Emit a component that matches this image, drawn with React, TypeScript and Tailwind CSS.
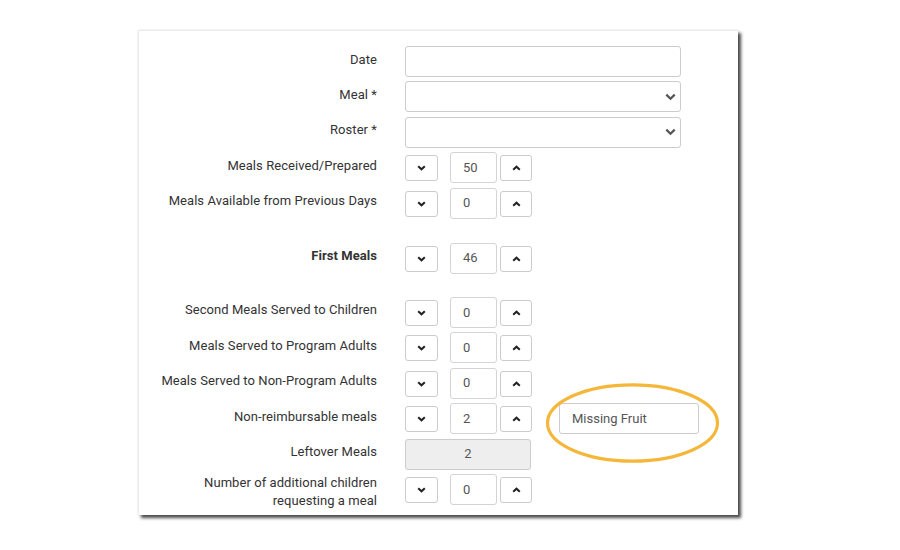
import React from "react";

const Down = () => (
  <svg width="9" height="6" viewBox="0 0 9 6" className="block">
    <path d="M1.2 1.2 L4.5 4.3 L7.8 1.2" fill="none" stroke="#222" strokeWidth="2" />
  </svg>
);
const Up = () => (
  <svg width="9" height="6" viewBox="0 0 9 6" className="block">
    <path d="M1.2 4.8 L4.5 1.7 L7.8 4.8" fill="none" stroke="#222" strokeWidth="2" />
  </svg>
);
const SelChev = () => (
  <svg width="11" height="8" viewBox="0 0 11 8" className="block">
    <path d="M1.3 1.6 L5.5 5.8 L9.7 1.6" fill="none" stroke="#555" strokeWidth="2.2" />
  </svg>
);

function Label({ children, bold, two }: { children: React.ReactNode; bold?: boolean; two?: boolean }) {
  return (
    <div
      className={`w-[238px] shrink-0 text-right text-[13px] leading-[18px] tracking-[0.06px] text-[#333] ${two ? "pt-[0.5px]" : "pt-[4.5px]"} ${bold ? "font-bold" : ""}`}
    >
      {children}
    </div>
  );
}

function Stepper({ value }: { value: string }) {
  return (
    <div className="flex items-start">
      <div className="mt-[3px] flex h-[26px] w-[33px] items-center justify-center rounded-[3px] border border-[#cccccc] bg-white">
        <Down />
      </div>
      <div className="ml-[12px] flex h-[31px] w-[47px] items-center rounded-[3px] border border-[#d4d4d4] bg-white pl-[12px] text-[13px] text-[#555]">
        {value}
      </div>
      <div className="ml-[3px] mt-[3px] flex h-[26px] w-[32px] items-center justify-center rounded-[3px] border border-[#cccccc] bg-white">
        <Up />
      </div>
    </div>
  );
}

function Row({ children, className = "" }: { children: React.ReactNode; className?: string }) {
  return <div className={`flex h-[35.4px] items-start ${className}`}>{children}</div>;
}

export default function App() {
  return (
    <div className="min-h-[550px] w-[900px] bg-white" style={{ fontFamily: "Roboto, 'Liberation Sans', sans-serif" }}>
      <div className="pl-[138px] pt-[30px]">
        <div className="relative h-[485px] w-[600px] border-l border-t border-[#ececec] bg-white pt-[15px] shadow-[0_0_2px_rgba(0,0,0,0.12),3px_3px_3px_rgba(0,0,0,0.7)]">
          <div className="flex flex-col">
            <Row>
              <Label>Date</Label>
              <div className="ml-[28px] h-[31px] w-[276px] rounded-[3px] border border-[#cccccc] bg-white" />
            </Row>
            <Row>
              <Label>Meal *</Label>
              <div className="ml-[28px] flex h-[31px] w-[276px] items-center justify-end rounded-[3px] border border-[#cccccc] bg-white pr-[4px]">
                <SelChev />
              </div>
            </Row>
            <Row>
              <Label>Roster *</Label>
              <div className="ml-[28px] flex h-[31px] w-[276px] items-center justify-end rounded-[3px] border border-[#cccccc] bg-white pr-[4px]">
                <SelChev />
              </div>
            </Row>
            <Row>
              <Label>Meals Received/Prepared</Label>
              <div className="ml-[28px]">
                <Stepper value="50" />
              </div>
            </Row>
            <Row className="mb-[19.6px]">
              <Label>Meals Available from Previous Days</Label>
              <div className="ml-[28px]">
                <Stepper value="0" />
              </div>
            </Row>
            <Row className="mb-[19px]">
              <Label bold>First Meals</Label>
              <div className="ml-[28px]">
                <Stepper value="46" />
              </div>
            </Row>
            <Row>
              <Label>Second Meals Served to Children</Label>
              <div className="ml-[28px]">
                <Stepper value="0" />
              </div>
            </Row>
            <Row>
              <Label>Meals Served to Program Adults</Label>
              <div className="ml-[28px]">
                <Stepper value="0" />
              </div>
            </Row>
            <Row>
              <Label>Meals Served to Non-Program Adults</Label>
              <div className="ml-[28px]">
                <Stepper value="0" />
              </div>
            </Row>
            <Row>
              <Label>Non-reimbursable meals</Label>
              <div className="ml-[28px]">
                <Stepper value="2" />
              </div>
              <div className="relative ml-[27px] flex h-[31px] w-[140px] items-center rounded-[3px] border border-[#cccccc] bg-white pl-[12px] text-[13px] text-[#555]">
                Missing Fruit
                <svg
                  className="pointer-events-none absolute left-[-15px] top-[-22px]"
                  width="176"
                  height="82"
                  viewBox="0 0 176 82"
                >
                  <ellipse cx="87.5" cy="41" rx="85" ry="38.2" fill="none" stroke="#f4b73a" strokeWidth="3.2" />
                </svg>
              </div>
            </Row>
            <Row>
              <Label>Leftover Meals</Label>
              <div className="ml-[28px] flex h-[31px] w-[126px] items-center justify-center rounded-[3px] border border-[#cccccc] bg-[#eeeeee] text-[13px] text-[#555]">
                2
              </div>
            </Row>
            <Row>
              <Label two>
                Number of additional children
                <br />
                requesting a meal
              </Label>
              <div className="ml-[28px]">
                <Stepper value="0" />
              </div>
            </Row>
          </div>
        </div>
      </div>
    </div>
  );
}
